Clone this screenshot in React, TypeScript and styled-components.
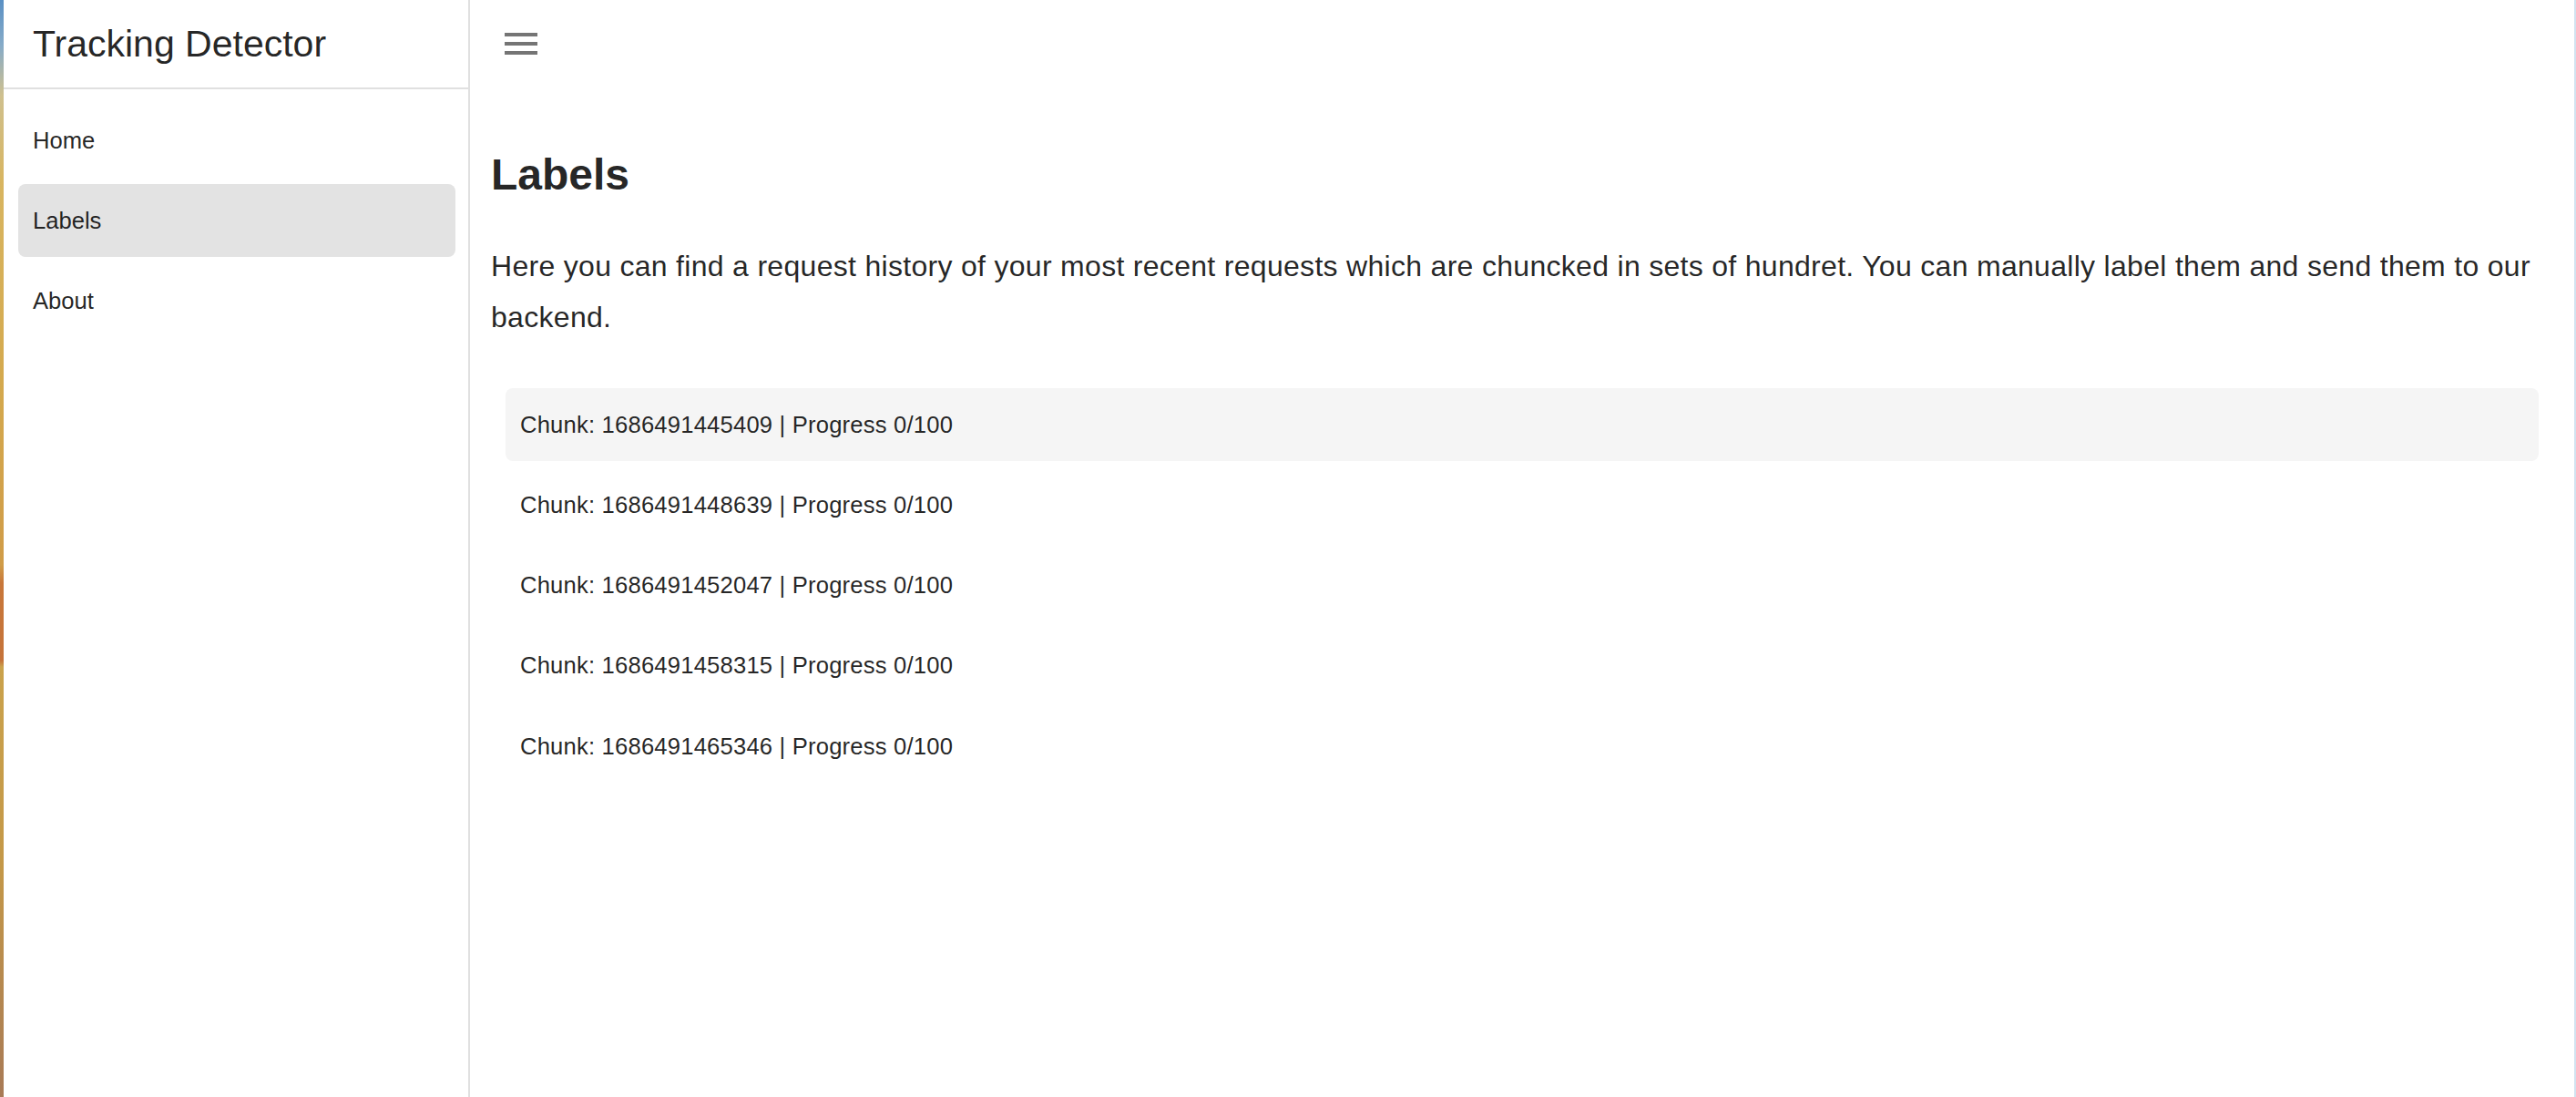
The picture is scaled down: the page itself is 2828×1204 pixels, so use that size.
import React from "react";
import styled, { createGlobalStyle } from "styled-components";

const GlobalStyle = createGlobalStyle`
  html, body {
    margin: 0;
    padding: 0;
    background: #ffffff;
  }
  body {
    font-family: "Liberation Sans", Arial, Helvetica, sans-serif;
    color: rgba(0, 0, 0, 0.87);
  }
  * { box-sizing: border-box; }
`;

const Page = styled.div`
  display: flex;
  width: 2828px;
  height: 1204px;
  overflow: hidden;
  background: #ffffff;
`;

const DesktopEdgeLeft = styled.div`
  flex: 0 0 4px;
  background: linear-gradient(
    to bottom,
    #5a90c4 0px,
    #86abc8 50px,
    #cfc08e 105px,
    #d8b560 200px,
    #d4a94e 420px,
    #d09c48 620px,
    #c8773a 640px,
    #c5733a 725px,
    #caa24c 732px,
    #c49848 950px,
    #a87a56 1204px
  );
`;

const DesktopEdgeRight = styled.div`
  flex: 0 0 2px;
  background: #d2e3f0;
`;

const Sidebar = styled.aside`
  flex: 0 0 512px;
  display: flex;
  flex-direction: column;
  border-right: 2px solid #e0e0e0;
  background: #ffffff;
`;

const SidebarHeader = styled.div`
  height: 98px;
  display: flex;
  align-items: center;
  padding-left: 32px;
  padding-top: 1px;
  padding-bottom: 1px;
  border-bottom: 2px solid #e0e0e0;
`;

const AppTitle = styled.div`
  font-size: 41px;
  line-height: 48px;
  font-weight: 400;
  color: rgba(0, 0, 0, 0.87);
`;

const NavList = styled.nav`
  display: flex;
  flex-direction: column;
  gap: 8px;
  padding: 16px 14px 16px 16px;
`;

const NavItem = styled.div<{ $active?: boolean }>`
  height: 80px;
  display: flex;
  align-items: center;
  padding: 0 16px;
  border-radius: 8px;
  font-size: 25.6px;
  line-height: 38px;
  color: rgba(0, 0, 0, 0.87);
  background: ${(p) => (p.$active ? "#e3e3e3" : "transparent")};
`;

const Main = styled.main`
  flex: 1 1 auto;
  display: flex;
  flex-direction: column;
  min-width: 0;
`;

const MainHeader = styled.div`
  height: 96px;
  display: flex;
  align-items: center;
  padding-left: 38px;
`;

const MenuButton = styled.button`
  display: flex;
  align-items: center;
  justify-content: center;
  padding: 0;
  border: none;
  background: transparent;
  cursor: pointer;
`;

const Content = styled.div`
  padding: 0 23px;
`;

const PageTitle = styled.h1`
  margin: 67px 0 0 0;
  font-size: 48px;
  line-height: 57.6px;
  font-weight: 700;
  color: rgba(0, 0, 0, 0.87);
`;

const Intro = styled.p`
  margin: 43px 0 0 0;
  font-size: 32px;
  line-height: 56px;
  letter-spacing: 0.3px;
  color: rgba(0, 0, 0, 0.87);
`;

const ChunkList = styled.div`
  display: flex;
  flex-direction: column;
  gap: 8.3px;
  margin: 50px 16px 0 16px;
`;

const ChunkItem = styled.div<{ $highlight?: boolean }>`
  height: 80px;
  display: flex;
  align-items: center;
  padding: 0 16px;
  border-radius: 8px;
  font-size: 25.6px;
  line-height: 38px;
  letter-spacing: 0.2px;
  color: rgba(0, 0, 0, 0.87);
  background: ${(p) => (p.$highlight ? "#f5f5f5" : "transparent")};
`;

const MenuIcon = () => (
  <svg width="36" height="24" viewBox="0 0 36 24" aria-hidden="true">
    <rect x="0" y="0" width="36" height="4" fill="#757575" />
    <rect x="0" y="10" width="36" height="4" fill="#757575" />
    <rect x="0" y="20" width="36" height="4" fill="#757575" />
  </svg>
);

const navItems = ["Home", "Labels", "About"];
const chunks = [
  "1686491445409",
  "1686491448639",
  "1686491452047",
  "1686491458315",
  "1686491465346",
];

export default function App() {
  return (
    <>
      <GlobalStyle />
      <Page>
        <DesktopEdgeLeft />
        <Sidebar>
          <SidebarHeader>
            <AppTitle>Tracking Detector</AppTitle>
          </SidebarHeader>
          <NavList>
            {navItems.map((item) => (
              <NavItem key={item} $active={item === "Labels"}>
                {item}
              </NavItem>
            ))}
          </NavList>
        </Sidebar>
        <Main>
          <MainHeader>
            <MenuButton aria-label="menu">
              <MenuIcon />
            </MenuButton>
          </MainHeader>
          <Content>
            <PageTitle>Labels</PageTitle>
            <Intro>
              Here you can find a request history of your most recent requests which are chuncked in
              sets of hundret. You can manually label them and send them to our backend.
            </Intro>
            <ChunkList>
              {chunks.map((id, i) => (
                <ChunkItem key={id} $highlight={i === 0}>
                  Chunk: {id} | Progress 0/100
                </ChunkItem>
              ))}
            </ChunkList>
          </Content>
        </Main>
        <DesktopEdgeRight />
      </Page>
    </>
  );
}
